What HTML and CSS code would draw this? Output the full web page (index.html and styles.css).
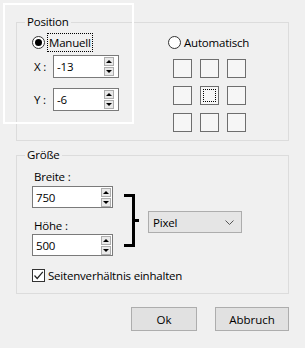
FILE: index.html
```html
<!DOCTYPE html>
<html lang="de">
<head>
<meta charset="utf-8">
<link rel="stylesheet" href="styles.css">
</head>
<body>
<div class="dialog">
  <div class="highlight"></div>

  <section class="group group-pos">
    <div class="group-title">Position</div>
    <div class="pos-body">
      <div class="manual">
        <label class="radio"><span class="radio-circle checked"></span><span class="focus">Manuell</span></label>
        <div class="field-row">
          <span class="axis">X :</span>
          <div class="spin spin-pos"><span class="spin-text">-13</span><span class="spin-btns"><span class="sb up"></span><span class="sb down"></span></span></div>
        </div>
        <div class="field-row row-y">
          <span class="axis">Y :</span>
          <div class="spin spin-pos"><span class="spin-text">-6</span><span class="spin-btns"><span class="sb up"></span><span class="sb down"></span></span></div>
        </div>
      </div>
      <div class="auto">
        <label class="radio"><span class="radio-circle"></span><span class="plain">Automatisch</span></label>
        <div class="anchor-grid">
          <span class="cell"></span><span class="cell"></span><span class="cell"></span>
          <span class="cell"></span><span class="cell sel"></span><span class="cell"></span>
          <span class="cell"></span><span class="cell"></span><span class="cell"></span>
        </div>
      </div>
    </div>
  </section>

  <section class="group group-size">
    <div class="group-title">Größe</div>
    <div class="size-body">
      <div class="dims">
        <div class="dim-label">Breite :</div>
        <div class="spin spin-size"><span class="spin-text">750</span><span class="spin-btns"><span class="sb up"></span><span class="sb down"></span></span></div>
        <div class="dim-label second">Höhe :</div>
        <div class="spin spin-size"><span class="spin-text">500</span><span class="spin-btns"><span class="sb up"></span><span class="sb down"></span></span></div>
      </div>
      <div class="bracket"></div>
      <div class="combo"><span>Pixel</span>
        <svg class="chev" width="9" height="5" viewBox="0 0 9 5"><path d="M0.5 0.5 L4.5 4.5 L8.5 0.5" fill="none" stroke="#555" stroke-width="1"/></svg>
      </div>
    </div>
    <label class="check-row"><span class="checkbox"><svg width="11" height="11" viewBox="0 0 11 11"><path d="M1.5 5.5 L4.2 8.5 L9.8 1.8" fill="none" stroke="#222" stroke-width="1.2"/></svg></span><span>Seitenverhältnis einhalten</span></label>
  </section>

  <div class="buttons">
    <button class="btn btn-ok">Ok</button>
    <button class="btn btn-cancel">Abbruch</button>
  </div>
</div>
</body>
</html>
```

FILE: styles.css
```css
* { box-sizing: border-box; }
html, body { margin: 0; padding: 0; }
body {
  background: #f0f0f0;
  font-family: "Open Sans", "Noto Sans", sans-serif;
  font-size: 11.5px;
  letter-spacing: -0.2px;
  color: #000;
  width: 305px;
  height: 348px;
  overflow: hidden;
}
.dialog {
  position: relative;
  padding-top: 22px;
  padding-left: 16px;
}
.highlight {
  position: absolute;
  left: 3px;
  top: 3px;
  width: 131px;
  height: 121px;
  border: 2px solid #fff;
  pointer-events: none;
}
.group {
  width: 273px;
  border: 1px solid #dcdcdc;
}
.group-pos { height: 119px; }
.group-size { height: 139px; margin-top: 14px; }
.group-title {
  width: fit-content;
  height: 16px;
  line-height: 16px;
  margin: -9px 0 0 8px;
  padding: 0 2px;
  background: #f0f0f0;
}
.pos-body {
  display: flex;
  padding: 3px 0 0 15px;
}
.manual { width: 136px; }
.radio {
  display: flex;
  align-items: center;
  height: 19px;
}
.radio-circle {
  width: 13px;
  height: 13px;
  border: 1px solid #333;
  border-radius: 50%;
  background: #fff;
  display: flex;
  align-items: center;
  justify-content: center;
  flex: none;
}
.radio-circle.checked::after {
  content: "";
  width: 7px;
  height: 7px;
  border-radius: 50%;
  background: #000;
}
.focus {
  margin-left: 2px;
  padding: 0 1px;
  height: 19px;
  line-height: 17px;
  border: 1px dotted #000;
}
.plain { margin-left: 3px; }
.field-row {
  display: flex;
  align-items: center;
  margin-top: 3px;
}
.row-y { margin-top: 10px; }
.axis {
  width: 19px;
  margin-left: 2px;
}
.spin {
  position: relative;
  display: flex;
  align-items: center;
  background: #fff;
  border: 1px solid #7a7a7a;
}
.spin-pos { width: 66px; height: 23px; }
.spin-size { width: 81px; height: 22px; }
.spin-text { padding-left: 3px; flex: 1; }
.spin-btns {
  display: flex;
  flex-direction: column;
  gap: 1px;
  margin-right: 4px;
}
.spin-size .spin-btns { margin-right: 1px; }
.sb {
  width: 10px;
  height: 9px;
  background: #e9e9e9;
  border: 1px solid #adadad;
  display: flex;
  align-items: center;
  justify-content: center;
}
.sb::after {
  content: "";
  width: 0;
  height: 0;
  border-left: 3px solid transparent;
  border-right: 3px solid transparent;
}
.sb.up::after { border-bottom: 3px solid #000; }
.sb.down::after { border-top: 3px solid #000; }
.anchor-grid {
  display: grid;
  grid-template-columns: repeat(3, 19px);
  grid-auto-rows: 19px;
  gap: 8px;
  margin: 7px 0 0 5px;
}
.cell {
  border: 1px solid #6e6e6e;
  background: #f6f6f6;
  position: relative;
}
.cell.sel::after {
  content: "";
  position: absolute;
  left: 2px;
  top: 2px;
  right: 2px;
  bottom: 2px;
  border: 1px dotted #000;
}
.size-body {
  display: flex;
  padding-left: 15px;
}
.dims {
  width: 81px;
  padding-top: 6px;
}
.dim-label {
  height: 16px;
  line-height: 16px;
  padding-left: 2px;
  margin-bottom: 1px;
}
.dim-label.second { margin-top: 10px; margin-bottom: 0; }
.bracket {
  position: relative;
  width: 11px;
  height: 53px;
  margin: 31px 0 0 11px;
  border-top: 3px solid #000;
  border-right: 3px solid #000;
  border-bottom: 3px solid #000;
}
.bracket::after {
  content: "";
  position: absolute;
  right: -7px;
  top: 22px;
  width: 4px;
  height: 3px;
  background: #000;
}
.combo {
  width: 94px;
  height: 22px;
  margin: 48px 0 0 13px;
  background: #e5e5e5;
  border: 1px solid #adadad;
  display: flex;
  align-items: center;
  justify-content: space-between;
  padding: 0 7px 0 4px;
}
.chev { display: block; }
.check-row {
  display: flex;
  align-items: center;
  height: 16px;
  margin: 11px 0 0 15px;
}
.checkbox {
  width: 13px;
  height: 13px;
  border: 1px solid #333;
  background: #fff;
  display: flex;
  align-items: center;
  justify-content: center;
  margin-right: 3px;
}
.checkbox svg { display: block; }
.buttons {
  display: flex;
  justify-content: flex-end;
  gap: 18px;
  width: 273px;
  margin-top: 13px;
}
.btn {
  font: inherit;
  height: 24px;
  background: #e1e1e1;
  border: 1px solid #adadad;
  padding: 0;
  color: #000;
}
.btn-ok { width: 66px; }
.btn-cancel { width: 74px; }
```
